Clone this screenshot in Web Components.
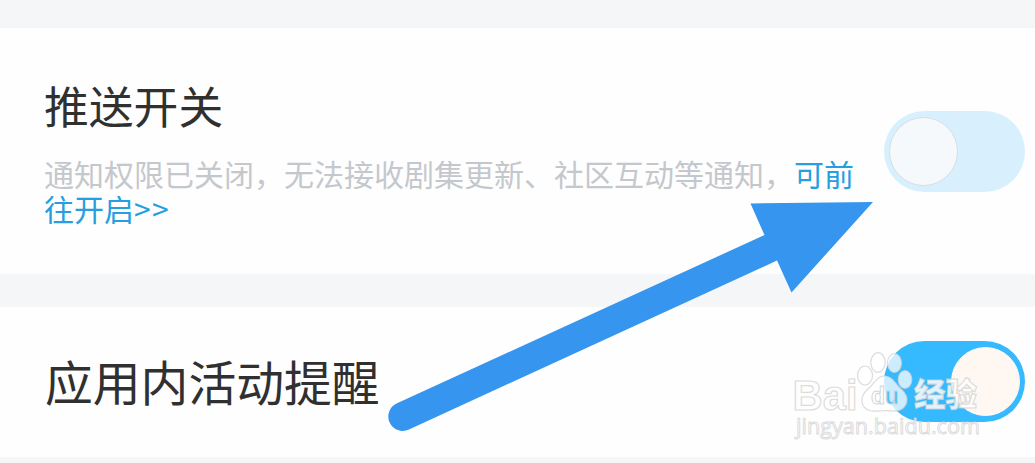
<!DOCTYPE html>
<html lang="zh-CN">
<head>
<meta charset="utf-8">
<title>推送开关</title>
<style>
  body {
    margin: 0;
    background: #f4f6f8;
    font-family: "Noto Sans CJK SC", sans-serif;
    overflow: hidden;
  }
</style>
</head>
<body>
<settings-page>
  <settings-row style="--height: 246px; --title-size: 44.8px; --text-gap: 4px">
    <span slot="title">推送开关</span>
    <span slot="desc">通知权限已关闭，无法接收剧集更新、社区互动等通知，<more-link>可前往开启<span style="letter-spacing: 1.4px">&gt;&gt;</span></more-link></span>
    <toggle-switch slot="action"></toggle-switch>
  </settings-row>
  <settings-row style="--height: 150px; --title-size: 47.8px; --indent: 45px; --bottom: 2px">
    <span slot="title">应用内活动提醒</span>
    <toggle-switch slot="action" checked></toggle-switch>
  </settings-row>
  <pointer-arrow slot="overlay"></pointer-arrow>
  <water-mark slot="overlay"></water-mark>
</settings-page>

<script>
class SettingsPage extends HTMLElement {
  constructor() {
    super();
    this.attachShadow({ mode: 'open' }).innerHTML = `
      <style>
        :host {
          display: block;
          position: relative;
          box-sizing: border-box;
          width: 1035px;
          height: 463px;
          padding-top: 28px;
          overflow: hidden;
        }

        .rows {
          display: flex;
          flex-direction: column;
          gap: 33px;
        }
      </style>

      <div class="rows"><slot></slot></div>
      <slot name="overlay"></slot>
    `;
  }
}

class SettingsRow extends HTMLElement {
  constructor() {
    super();
    this.attachShadow({ mode: 'open' }).innerHTML = `
      <style>
        :host {
          display: flex;
          align-items: center;
          justify-content: space-between;
          box-sizing: border-box;
          height: var(--height);
          padding: 0 10px var(--bottom, 0) var(--indent, 44px);
          background: #fefefe;
        }

        .text {
          width: 815px;
          padding-bottom: var(--text-gap, 0);
        }

        .title {
          font-size: var(--title-size);
          line-height: 66px;
          color: #303030;
        }

        .desc {
          font-size: 30px;
          line-height: 35.5px;
          color: #c4c8cd;
        }

        .desc ::slotted(*) {
          display: block;
          padding-top: 18px;
        }
      </style>

      <div class="text">
        <div class="title"><slot name="title"></slot></div>
        <div class="desc"><slot name="desc"></slot></div>
      </div>
      <slot name="action"></slot>
    `;
  }
}

class MoreLink extends HTMLElement {
  constructor() {
    super();
    this.attachShadow({ mode: 'open' }).innerHTML = '<style>:host { display: inline; color: #279ee0; }</style><slot></slot>';
  }
}

class ToggleSwitch extends HTMLElement {
  constructor() {
    super();
    this.attachShadow({ mode: 'open' }).innerHTML = `
      <style>
        :host {
          display: flex;
          align-items: center;
          box-sizing: border-box;
          flex: none;
          width: 141px;
          height: 81px;
          padding: 0 5px;
          border-radius: 41px;
          background: #d8f0fe;
        }

        :host([checked]) {
          justify-content: flex-end;
          background: #35b9ff;
        }

        .knob {
          box-sizing: border-box;
          width: 69px;
          height: 69px;
          border: 1px solid #d3dfe6;
          border-radius: 50%;
          background: #f6f9fc;
        }

        :host([checked]) .knob {
          border-color: #fff8f2;
          background: #fff8f2;
        }
      </style>

      <div class="knob"></div>
    `;
  }
}

class PointerArrow extends HTMLElement {
  constructor() {
    super();
    this.attachShadow({ mode: 'open' }).innerHTML = `
      <style>
        :host {
          display: block;
          position: absolute;
          inset: 0;
        }
        svg { display: block; }
      </style>

      <svg width="1035" height="463" viewBox="0 0 1035 463">
        <path fill="#3595ef" d="M873 202 L750.5 203.5 L764.5 235 L396.5 403.5 A14.3 14.3 0 0 0 409 429.5 L777 260.5 L791.5 292.5 Z"/>
      </svg>
    `;
  }
}

class WaterMark extends HTMLElement {
  constructor() {
    super();
    this.attachShadow({ mode: 'open' }).innerHTML = `
      <style>
        :host {
          display: block;
          position: absolute;
          left: 785px;
          top: 345px;
        }
        svg { display: block; }
        .mark {
          fill: #fff;
          fill-opacity: .75;
          stroke: #d0d0d0;
          stroke-opacity: .75;
          stroke-width: 1.2;
        }
        .brand { font: bold 42px "Liberation Sans", sans-serif; }
        .du { font: bold 24px "Liberation Sans", sans-serif; stroke: #cfd6d9; }
        .cn { font: 900 32px "Noto Sans CJK SC", sans-serif; fill-opacity: .85; }
        .url { font: 21.5px "Open Sans", sans-serif; stroke-width: 1; }
      </style>

      <svg width="210" height="100" viewBox="785 345 210 100">
        <defs>
          <linearGradient id="du-fill" gradientUnits="userSpaceOnUse" x1="884" x2="885" y1="0" y2="0">
            <stop offset="0" stop-color="#fff"/>
            <stop offset="1" stop-color="#52c2fb"/>
          </linearGradient>
        </defs>
        <text class="mark brand" x="792.5" y="410" textLength="65" lengthAdjust="spacingAndGlyphs">Bai</text>
        <g class="mark">
          <ellipse cx="865" cy="375.5" rx="7.5" ry="9.5"/>
          <ellipse cx="878" cy="362.500" rx="7.2" ry="9.8"/>
          <ellipse cx="894.5" cy="363" rx="7" ry="9.5"/>
          <ellipse cx="905" cy="379.5" rx="6.8" ry="9"/>
          <path d="M884.5 376 C892 376 895 383 900 388 C907 394 909 400 905 406 C901 412 894 411 885 410.5 C876 411 869 413 864 407 C860 401 862 394 868 389 C875 383 877 376 884.5 376 Z"/>
        </g>
        <text class="du" x="871" y="404" textLength="28" lengthAdjust="spacingAndGlyphs" fill="url(#du-fill)">du</text>
        <text class="mark cn" x="914" y="406" textLength="63" lengthAdjust="spacingAndGlyphs">经验</text>
        <text class="mark url" x="796" y="434" textLength="184" lengthAdjust="spacingAndGlyphs">jingyan.baidu.com</text>
      </svg>
    `;
  }
}

customElements.define('settings-page', SettingsPage);
customElements.define('settings-row', SettingsRow);
customElements.define('more-link', MoreLink);
customElements.define('toggle-switch', ToggleSwitch);
customElements.define('pointer-arrow', PointerArrow);
customElements.define('water-mark', WaterMark);
</script>
</body>
</html>
